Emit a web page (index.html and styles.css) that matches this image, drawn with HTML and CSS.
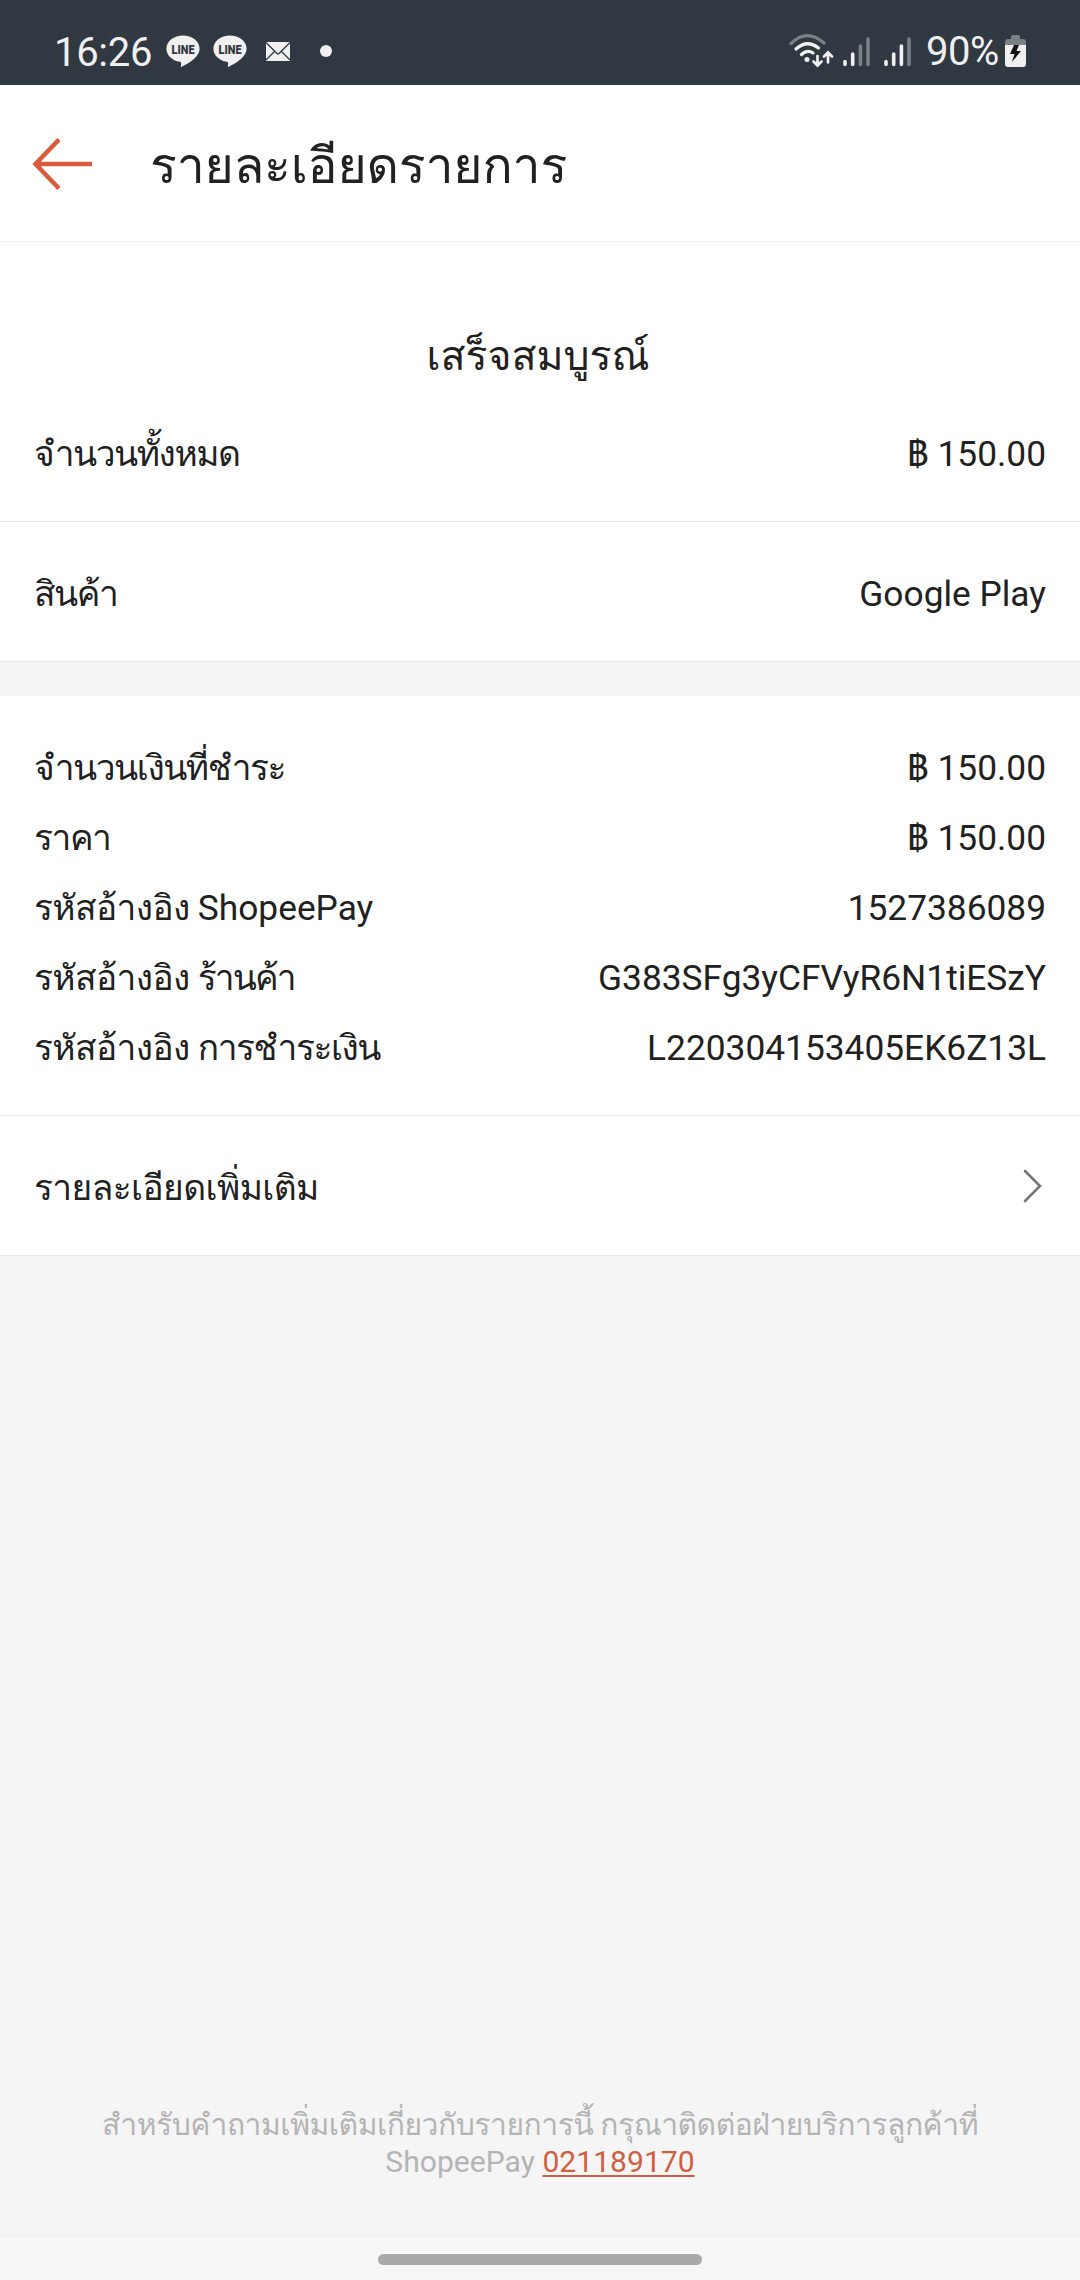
FILE: index.html
```html
<!DOCTYPE html>
<html lang="th">
<head>
<meta charset="utf-8">
<title>รายละเอียดรายการ</title>
<link rel="stylesheet" href="styles.css">
</head>
<body>
<div class="status">
  <span class="clock">16:26</span>
  <svg class="line-icon" width="34" height="33" viewBox="0 0 34 33"><path d="M17 0.5C7.8 .5.4 6.2.4 13.8c0 6.500 5.700 11.900 13.400 13 1.300.3 1.500 1.100 1.300 2.400l-.4 3C19 30.500 33.600 23 33.600 13.800 33.600 6.200 26.200.5 17 .5Z" fill="#f0f0f0"/><text x="17" y="18.800" text-anchor="middle" textLength="23" lengthAdjust="spacingAndGlyphs" class="line-text">LINE</text></svg>
  <svg class="line-icon second" width="34" height="33" viewBox="0 0 34 33"><path d="M17 0.5C7.8 .5.4 6.2.4 13.8c0 6.500 5.700 11.900 13.400 13 1.300.3 1.500 1.100 1.300 2.400l-.4 3C19 30.500 33.600 23 33.600 13.800 33.600 6.200 26.200.5 17 .5Z" fill="#f0f0f0"/><text x="17" y="18.800" text-anchor="middle" textLength="23" lengthAdjust="spacingAndGlyphs" class="line-text">LINE</text></svg>
  <svg class="mail" width="24" height="19" viewBox="0 0 24 19"><path d="M0 0h24v19H0z" fill="#f0f0f0"/><path d="M0 .5 11 11.500q1 1 2 0L24 .5M0 18l8.500-8.500M24 18l-8.500-8.500" fill="none" stroke="#303942" stroke-width="1.300"/></svg>
  <span class="dot"></span>
  <svg class="wifi" width="46" height="36" viewBox="0 0 46 36" fill="none" stroke="#f0f0f0" stroke-linecap="round" stroke-width="3.200"><path d="M3 10.500Q19 -5 36 10" stroke="#7b8087"/><path d="M8 16Q19 6 30.500 15M13.500 21.500Q19 16 25 20"/><circle cx="19" cy="26.500" r="2.500" fill="#f0f0f0" stroke="none"/><path d="M29.500 23v9M25.500 28.500l4 4 4-4M40 29.500V20M36 23.500l4-4 4 4" stroke-width="2.700"/></svg>
  <svg class="signal" width="28" height="30" viewBox="0 0 28 30" fill="none" stroke="#f0f0f0" stroke-width="3.600" stroke-linecap="round"><path d="M2 24.500v3M9.700 17v10.500"/><path d="M17.400 9v18.500M25 2v25.500" stroke="#7b8087"/></svg>
  <svg class="signal sim2" width="28" height="30" viewBox="0 0 28 30" fill="none" stroke="#f0f0f0" stroke-width="3.600" stroke-linecap="round"><path d="M2 24.500v3M9.700 17v10.500M17.400 9v18.500"/><path d="M25 2v25.500" stroke="#7b8087"/></svg>
  <span class="percent">90%</span>
  <svg class="battery" width="21" height="32" viewBox="0 0 21 32"><path d="M6 4V1.500Q6 0 7.500 0h6Q15 0 15 1.500V4h3q3 0 3 3v3H0V7q0-3 3-3Z" fill="#7b8087"/><path d="M0 10h21v19q0 3-3 3H3q-3 0-3-3Z" fill="#f0f0f0"/><path d="M9 10 5 19h4.500L7 27l9-11h-4.500L14 10Z" fill="#111"/></svg>
</div>
<header class="header">
  <svg class="back" width="60" height="54" viewBox="0 0 60 54"><path d="M27 2.500 3.500 27 27 51.500M3.500 27H60" fill="none" stroke="#d75b3c" stroke-width="4.500"/></svg>
  <h1 class="title">รายละเอียดรายการ</h1>
</header>
<main>
  <section class="summary">
    <h2 class="state">เสร็จสมบูรณ์</h2>
    <div class="row total"><span class="tight">จำนวนทั้งหมด</span><span class="value">฿ 150.00</span></div>
  </section>
  <section class="row item"><span class="tight">สินค้า</span><span class="value">Google Play</span></section>
  <section class="details">
    <div class="row"><span class="tight">จำนวนเงินที่ชำระ</span><span class="value">฿ 150.00</span></div>
    <div class="row"><span class="tight">ราคา</span><span class="value">฿ 150.00</span></div>
    <div class="row"><span><span class="snug">รหัสอ้างอิง </span>ShopeePay</span><span class="value">1527386089</span></div>
    <div class="row"><span><span class="snug">รหัสอ้างอิง </span><span class="tighter">ร้านค้า</span></span><span class="value">G383SFg3yCFVyR6N1tiESzY</span></div>
    <div class="row"><span><span class="snug">รหัสอ้างอิง </span><span class="tight">การชำระเงิน</span></span><span class="value">L220304153405EK6Z13L</span></div>
  </section>
  <section class="row more"><span class="snug">รายละเอียดเพิ่มเติม</span>
    <svg class="chevron" width="20" height="34" viewBox="0 0 20 34"><path d="M2 2 17 17 2 32" fill="none" stroke="#757575" stroke-width="2.600" stroke-linecap="round"/></svg>
  </section>
</main>
<footer class="footer">
  <p class="help"><span class="help-text">สำหรับคำถามเพิ่มเติมเกี่ยวกับรายการนี้ กรุณาติดต่อฝ่ายบริการลูกค้าที่</span><br>ShopeePay <a class="phone">021189170</a></p>
</footer>
<div class="nav"><span class="handle"></span></div>
</body>
</html>
```
FILE: styles.css
```css
* { box-sizing: border-box; }
body {
  margin: 0; width: 1080px; height: 2280px; overflow: hidden;
  display: flex; flex-direction: column;
  background: #f5f5f5; color: #212121;
  font-family: Roboto, Loma, "Noto Sans Thai Looped", "Noto Sans Thai", sans-serif;
  font-size: 35.3px;
}
.status { height: 85px; background: #303942; color: #f0f0f0; display: flex; align-items: center; padding: 17px 0 0 54px; flex: none; }
.clock { font-size: 40px; line-height: 46px; width: 112px; letter-spacing: -.3px; padding-top: 3px; }
.line-icon.second { margin-left: 13px; }
.line-text { font: 900 12.500px Roboto, sans-serif; fill: #303942; }
.mail { margin-left: 19px; }
.dot { width: 12px; height: 12px; border-radius: 50%; background: #f0f0f0; margin-left: 30px; }
.wifi { margin-left: 456px; }
.signal { margin-left: 9px; margin-top: 2px; }
.sim2 { margin-left: 13px; }
.percent { font-size: 40px; line-height: 46px; margin-left: 14px; padding-top: 1px; width: 79px; flex: none; letter-spacing: -.5px; }
.header { height: 157px; background: #fff; border-bottom: 1px solid #eee; display: flex; align-items: center; padding: 2px 32px 0; flex: none; }
.title { margin: 3px 0 0 58px; font-size: 50px; font-weight: 400; line-height: 80px; white-space: nowrap; letter-spacing: -.2px; }
.summary { height: 280px; background: #fff; border-bottom: 1px solid #e6e6e6; padding-top: 79px; }
.state { margin: 0; padding-right: 4px; font-size: 41px; font-weight: 400; line-height: 70px; text-align: center; }
.row { display: flex; justify-content: space-between; align-items: center; height: 70px; padding: 0 34px; line-height: 70px; white-space: nowrap; }
.total { margin-top: 28px; }
.tight { letter-spacing: -1.450px; }
.tighter { letter-spacing: -1.900px; }
.snug { letter-spacing: -.6px; }
.item { height: 140px; background: #fff; border-bottom: 1px solid #e6e6e6; padding-top: 5px; }
.details { margin-top: 34px; height: 420px; background: #fff; border-bottom: 1px solid #e6e6e6; padding-top: 37px; }
.more { height: 140px; background: #fff; border-bottom: 1px solid #e6e6e6; padding-top: 5px; }
.chevron { margin: -4px 3px 0 0; }
.footer { margin-top: auto; height: 131px; text-align: center; color: #b4b4b4; font-size: 30.100px; flex: none; }
.help { margin: 0; line-height: 37px; white-space: nowrap; }
.help-text { letter-spacing: -.5px; }
.phone { color: #cf5f43; text-decoration: underline; text-decoration-thickness: 2px; text-underline-offset: 3px; }
.nav { height: 43px; flex: none; background: #f7f7f7; display: flex; justify-content: center; padding-top: 17px; }
.handle { width: 324px; height: 11px; border-radius: 6px; background: #a9a9a9; }
```
